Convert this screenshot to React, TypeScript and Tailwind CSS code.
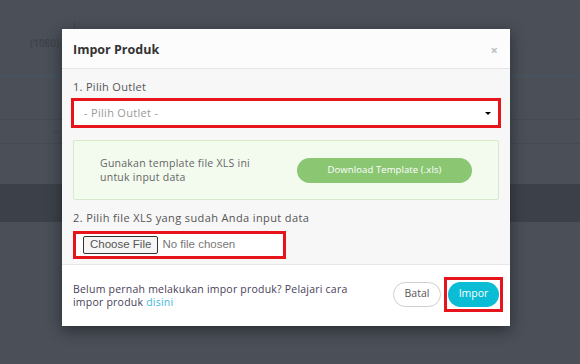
import { ChevronDown } from 'lucide-react';

export default function App() {
  return (
    <div
      className="relative w-[580px] h-[364px] overflow-hidden bg-[#4a4f58]"
      style={{ fontFamily: '"Open Sans", "Noto Sans", sans-serif' }}
    >
      {/* halaman di belakang overlay */}
      <div className="flex flex-col">
        <div className="h-[75px] flex">
          <div className="w-[74px] pt-[36px] pl-[30px] text-[10px] font-semibold text-[#3d424a]">(1080)</div>
          <div className="w-px mt-[22px] bg-[#40454e]" />
        </div>
        <div className="h-px bg-[#3e5864]" />
        <div className="h-[43px]" />
        <div className="h-px bg-[#444952]" />
        <div className="h-[23px] flex justify-end pr-[520px] items-center">
          <ChevronDown size={8} className="text-[#3b4048]" />
        </div>
        <div className="h-px bg-[#444952]" />
        <div className="h-[40px]" />
        <div className="h-[38px] bg-[#3c4149]" />
      </div>

      {/* modal */}
      <div className="absolute left-[62px] top-[29px] w-[448px] bg-white shadow-[0_4px_14px_rgba(0,0,0,0.45)] flex flex-col">
        <div className="h-[40px] pt-[3px] flex items-center justify-between px-[11px] border-b border-[#e5e5e5] bg-[#fcfcfc]">
          <span className="text-[12.5px] font-bold text-[#333]">Impor Produk</span>
          <span className="text-[13px] font-bold text-[#bcbcbc] leading-none mr-[1px]">×</span>
        </div>

        <div className="bg-[#f7f7f7] px-[11px] pt-[10px] pb-[5px] flex flex-col">
          <div className="text-[11px] text-[#555] leading-[16px] tracking-[0.3px]">1. Pilih Outlet</div>
          <div className="mt-[3px] -mx-[2px] border-[3px] border-[#e8141c] bg-white h-[30px] flex items-center justify-between pl-[10px] pr-[7px]">
            <span className="text-[11px] text-[#9a9a9a] tracking-[0.3px]">- Pilih Outlet -</span>
            <span className="w-0 h-0 border-l-[3px] border-r-[3px] border-t-[3px] border-l-transparent border-r-transparent border-t-black" />
          </div>

          <div className="mt-[12px] h-[60px] bg-[#f3faee] border border-[#d6e9c9] rounded-[2px] flex items-center pl-[26px] pr-[26px] justify-between">
            <div className="text-[10.5px] leading-[14px] text-[#666] w-[175px] tracking-[0.25px]">
              Gunakan template file XLS ini untuk input data
            </div>
            <div className="h-[25px] w-[175px] rounded-full bg-[#8bc773] flex items-center justify-center text-[9.5px] font-medium text-white tracking-[0.1px]">
              Download Template (.xls)
            </div>
          </div>

          <div className="mt-[10px] text-[11px] text-[#555] leading-[16px] tracking-[0.38px]">2. Pilih file XLS yang sudah Anda input data</div>
          <div className="mt-[5px] w-[213px] h-[28px] border-[3px] border-[#e8141c] bg-white flex items-center pl-[7px]" style={{ fontFamily: '"Liberation Sans", Arial, sans-serif' }}>
            <span className="h-[18px] px-[6px] border border-[#333] rounded-[2px] bg-[#f6f6f6] text-[11.5px] text-[#555] flex items-center">Choose File</span>
            <span className="ml-[4px] text-[11.5px] text-[#777]">No file chosen</span>
          </div>
        </div>

        <div className="border-t border-[#e6e6e6] h-[62px] flex items-center justify-between pl-[11px] pr-[7px]">
          <div className="flex flex-col text-[10.5px] leading-[13px] text-[#48405a] tracking-[0.22px]">
            <span>Belum pernah melakukan impor produk? Pelajari cara</span>
            <div className="flex gap-[3px]">
              <span>impor produk</span>
              <span className="text-[#3fb8dc]">disini</span>
            </div>
          </div>
          <div className="flex items-center gap-[3px] -mt-[3px]">
            <div className="h-[25px] w-[48px] rounded-full border border-[#cfcfcf] bg-white flex items-center justify-center text-[10.5px] text-[#555]">Batal</div>
            <div className="border-[3px] border-[#e8141c] px-[1px] py-[2px]">
              <div className="h-[25px] w-[51px] rounded-full bg-[#0bbcd5] flex items-center justify-center text-[10.5px] text-white">Impor</div>
            </div>
          </div>
        </div>
      </div>
    </div>
  );
}
